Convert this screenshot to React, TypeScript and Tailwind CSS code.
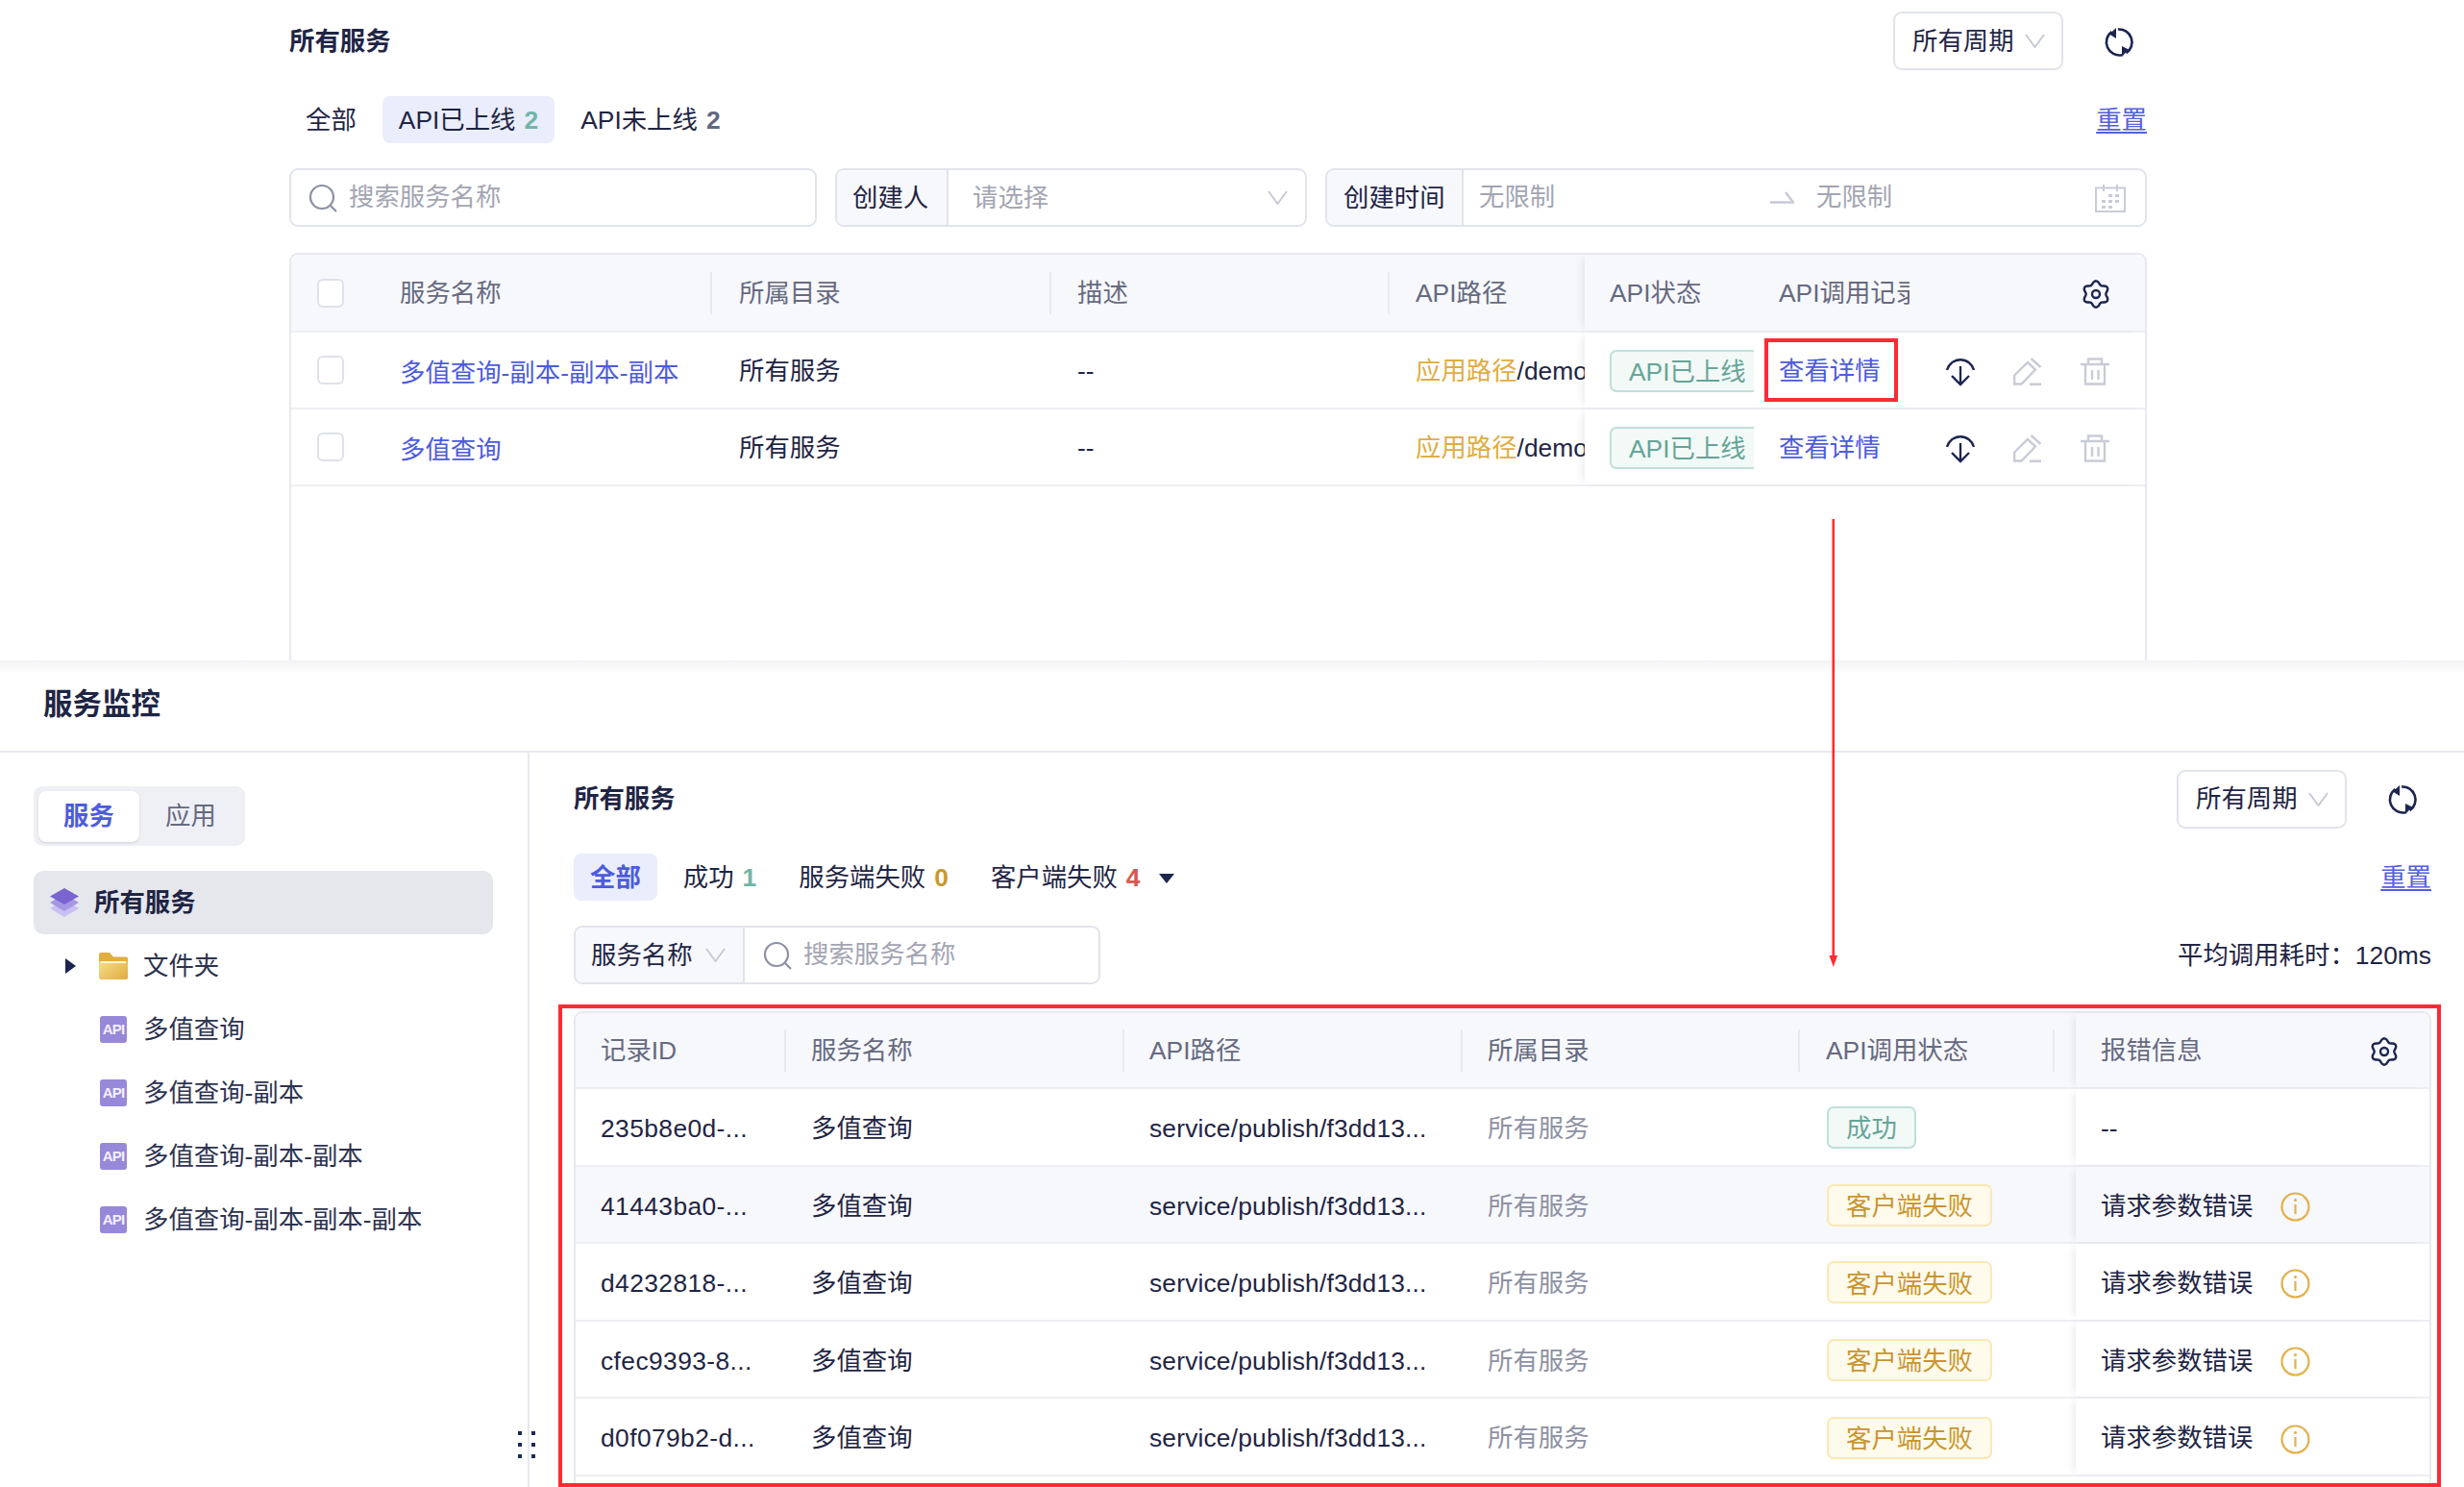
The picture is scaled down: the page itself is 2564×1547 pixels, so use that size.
import type { ReactNode } from 'react'

type Tab = { label: string; count?: string; countClass?: string; active?: boolean; bold?: boolean }

const TOP_TABS: Tab[] = [
  { label: '全部' },
  { label: 'API已上线', count: '2', countClass: 'text-[#72b5a7]', active: true },
  { label: 'API未上线', count: '2', countClass: 'text-[#636880]' },
]

const MONITOR_TABS: Tab[] = [
  { label: '全部', active: true, bold: true },
  { label: '成功', count: '1', countClass: 'text-[#72b5a7]' },
  { label: '服务端失败', count: '0', countClass: 'text-[#c99a2e]' },
  { label: '客户端失败', count: '4', countClass: 'text-[#d4594f]' },
]

const SERVICES = [
  { id: 1, name: '多值查询-副本-副本-副本' },
  { id: 2, name: '多值查询' },
]

const RECORDS = [
  { id: '235b8e0d-...', ok: true },
  { id: '41443ba0-...', ok: false, hover: true },
  { id: 'd4232818-...', ok: false },
  { id: 'cfec9393-8...', ok: false },
  { id: 'd0f079b2-d...', ok: false },
]

const TREE = ['多值查询', '多值查询-副本', '多值查询-副本-副本', '多值查询-副本-副本-副本']

// wavy six-lobed outline for the settings cog
const GEAR_PATH =
  Array.from({ length: 73 }, (_, i) => {
    const a = (i / 72) * Math.PI * 2
    const r = 12 + 1.7 * Math.cos(6 * a)
    return `${i === 0 ? 'M' : 'L'}${(15 + r * Math.sin(a)).toFixed(2)} ${(15 - r * Math.cos(a)).toFixed(2)}`
  }).join(' ') + ' Z'

function Chevron() {
  return (
    <svg className="w-[21px] h-[15px] shrink-0" viewBox="0 0 21 15" fill="none" stroke="#c8cad6" strokeWidth="2">
      <path d="M1 1l9.5 13L20 1" />
    </svg>
  )
}

function SearchIcon() {
  return (
    <svg className="w-[30px] h-[30px] shrink-0" viewBox="0 0 30 30" fill="none" stroke="#8d90a2" strokeWidth="2.2">
      <circle cx="14" cy="14" r="12" />
      <path d="M22.5 22.5L29 29" />
    </svg>
  )
}

function RefreshIcon() {
  return (
    <svg className="mt-[2px] w-[32px] h-[32px] shrink-0" viewBox="0 0 32 32" fill="none" stroke="#1c2550" strokeWidth="2.6">
      <path d="M8.500 5A13.500 13.500 0 0 0 19 29.200" />
      <path d="M15 2.500A13.500 13.500 0 0 1 23.500 27.200" />
      <path d="M13 1v11L6 7.500z" fill="#1c2550" stroke="none" />
      <path d="M19 31V20l7 3.500z" fill="#1c2550" stroke="none" />
    </svg>
  )
}

function GearIcon() {
  return (
    <svg className="mt-[2px] w-[30px] h-[30px] shrink-0" viewBox="0 0 30 30" fill="none" stroke="#1c2550" strokeWidth="2.4">
      <path d={GEAR_PATH} />
      <circle cx="15" cy="15" r="4" />
    </svg>
  )
}

function DownloadIcon() {
  return (
    <svg className="w-[30px] h-[30px]" viewBox="0 0 30 30" fill="none" stroke="#1c2550" strokeWidth="2.3">
      <path d="M1 13A14.5 14.5 0 0 1 29 13" />
      <path d="M15 9v19M6 19l9 9 9-9" />
    </svg>
  )
}

function EditIcon() {
  return (
    <svg className="w-[30px] h-[30px]" viewBox="0 0 30 30" fill="none" stroke="#c9ccd6" strokeWidth="2.4">
      <path d="M1.2 27.5V18.5L15 5l8 7.5L8.5 27.5z" />
      <path d="M18.5 1l10 9M17 27.8h12" />
    </svg>
  )
}

function TrashIcon() {
  return (
    <svg className="w-[30px] h-[30px]" viewBox="0 0 30 30" fill="none" stroke="#c9ccd6" strokeWidth="2.4">
      <path d="M0 7h30M8 7V1.5h14V7M5 7v20.5h20V7M12 13v10M18.500 13v10" />
    </svg>
  )
}

function InfoIcon() {
  return (
    <svg className="w-[31px] h-[31px] shrink-0" viewBox="0 0 31 31" fill="none" stroke="#e3b04b" strokeWidth="2.2">
      <circle cx="15.500" cy="15.500" r="14" />
      <path d="M15.500 13v10" />
      <circle cx="15.500" cy="8.500" r="1.600" fill="#e3b04b" stroke="none" />
    </svg>
  )
}

function CalendarIcon() {
  return (
    <svg className="w-[32px] h-[30px] shrink-0" viewBox="0 0 32 30" fill="none" stroke="#c9ccd8" strokeWidth="2">
      <path d="M1 4.500h30v24.500H1zM9 1v7M23 1v7" />
      <path
        d="M14 11h4v3h-4zM21 11h4v3h-4zM7 17h4v3H7zM14 17h4v3h-4zM21 17h4v3h-4zM7 23h4v3H7zM14 23h4v3h-4z"
        fill="#c9ccd8"
        stroke="none"
      />
    </svg>
  )
}

function StackIcon() {
  return (
    <svg className="w-[30px] h-[30px] shrink-0" viewBox="0 0 30 30">
      <path d="M15 12L30 21 15 30 0 21z" fill="#c9bff2" />
      <path d="M15 6L30 15 15 24 0 15z" fill="#a797e2" />
      <path d="M15 0L30 8.500 15 17 0 8.500z" fill="#7a64cf" />
    </svg>
  )
}

function FolderIcon() {
  return (
    <svg className="w-[30px] h-[28px] shrink-0" viewBox="0 0 30 28">
      <defs>
        <linearGradient id="folderFill" x1="0" y1="0.2" x2="1" y2="1">
          <stop offset="0" stopColor="#f5d884" />
          <stop offset="1" stopColor="#e0ac3e" />
        </linearGradient>
      </defs>
      <path d="M0 2a2 2 0 0 1 2-2h9l4 4.500h13a2 2 0 0 1 2 2V12H0z" fill="#e2ae3f" />
      <rect x="0" y="9" width="30" height="19" rx="2" fill="url(#folderFill)" />
      <rect x="2" y="9" width="26" height="2" fill="#fdf3d4" />
    </svg>
  )
}

function ApiIcon() {
  return (
    <span className="flex w-[28px] h-[28px] shrink-0 items-center justify-center rounded-[3px] bg-[#9888da] text-[15px] font-bold tracking-[-0.8px] text-[#f4f1ff]">
      API
    </span>
  )
}

function PeriodSelect() {
  return (
    <div className="flex w-[177px] h-[61px] items-center gap-[11px] rounded-[9px] border-2 border-[#e2e4ec] pl-[18px]">
      <span className="pt-[2px]">所有周期</span>
      <Chevron />
    </div>
  )
}

function TabRow({ tabs, extra }: { tabs: Tab[]; extra?: ReactNode }) {
  return (
    <div className="flex h-[49px] items-center justify-between">
      <div className="flex items-center gap-[10px]">
        {tabs.map((tab) => (
          <div
            key={tab.label}
            className={`flex h-[49px] items-center gap-[9px] rounded-[8px] px-[17px] pt-[2px] ${tab.active ? 'bg-[#e9edfc]' : ''} ${tab.bold ? 'font-bold text-[#4d5bdc]' : ''}`}
          >
            <span>{tab.label}</span>
            {tab.count && <span className={`font-bold ${tab.countClass}`}>{tab.count}</span>}
          </div>
        ))}
        {extra}
      </div>
      <span className="pt-[2px] text-[#5560d8] underline underline-offset-[3px]">重置</span>
    </div>
  )
}

function Badge({ tone, children }: { tone: 'green' | 'amber'; children: ReactNode }) {
  const toneClass =
    tone === 'green'
      ? 'border-[#bfe0d9] bg-[#f2f9f7] text-[#66a598]'
      : 'border-[#fbe8b4] bg-[#fefaec] text-[#c9952e]'
  return (
    <span className={`flex h-[44px] shrink-0 items-center rounded-[7px] border-2 px-[18px] pt-[4px] ${toneClass}`}>
      {children}
    </span>
  )
}

function HeadCell({ className, label, divider = true }: { className: string; label: string; divider?: boolean }) {
  return (
    <div className={`flex h-full items-center justify-between text-[#666a80] ${className}`}>
      <span className="pt-[3px] whitespace-nowrap">{label}</span>
      {divider && <i className="h-[44px] w-[2px] bg-[#e9eaf0]" />}
    </div>
  )
}

function ServiceTable() {
  return (
    <div className="flex-1 rounded-t-[9px] border-x-2 border-t-2 border-[#e8e9f0]">
      <div className="flex h-[81px] justify-between rounded-t-[8px] border-b-2 border-[#eeeff3] bg-[#f7f8fc]">
        <div className="flex">
          <div className="flex w-[88px] items-center pl-[27px]">
            <i className="h-[30px] w-[28px] rounded-[6px] border-2 border-[#dfe1ea] bg-white" />
          </div>
          <HeadCell className="w-[350px] pl-[25px]" label="服务名称" />
          <HeadCell className="w-[353px] pl-[28px]" label="所属目录" />
          <HeadCell className="w-[352px] pl-[27px]" label="描述" />
          <HeadCell className="w-[203px] pl-[27px]" label="API路径" divider={false} />
        </div>
        <div className="flex w-[583px] shadow-[-6px_0_8px_-4px_rgba(30,35,70,0.1)]">
          <div className="flex w-[176px] items-center pl-[26px] pt-[3px] text-[#666a80]">API状态</div>
          <div className="flex w-[162px] items-center overflow-hidden pl-[26px] pt-[3px] whitespace-nowrap text-[#666a80]">API调用记录</div>
          <div className="flex flex-1 items-center justify-end pr-[36px]">
            <GearIcon />
          </div>
        </div>
      </div>
      {SERVICES.map((service, index) => (
        <div key={service.id} className="flex h-[80px] justify-between border-b-2 border-[#eeeff3]">
          <div className="flex">
            <div className="flex w-[88px] items-center pl-[27px]">
              <i className="h-[30px] w-[28px] rounded-[6px] border-2 border-[#dfe1ea]" />
            </div>
            <div className="flex w-[350px] items-center pl-[25px] pt-[8px] whitespace-nowrap text-[#4d5bdc]">{service.name}</div>
            <div className="flex w-[353px] items-center pl-[28px] pt-[3px]">所有服务</div>
            <div className="flex w-[352px] items-center pl-[27px] pt-[3px]">--</div>
            <div className="flex w-[203px] items-center overflow-hidden pl-[27px] pt-[4px] whitespace-nowrap">
              <span className="text-[#e0ad44]">应用路径</span>/demo/list
            </div>
          </div>
          <div className="flex w-[583px] bg-white shadow-[-6px_0_8px_-4px_rgba(30,35,70,0.1)]">
            <div className="flex w-[176px] items-center overflow-hidden pl-[26px] pt-[2px]">
              <Badge tone="green">API已上线</Badge>
            </div>
            <div className="relative flex w-[162px] items-center pl-[26px] pt-[3px] text-[#4d5bdc]">
              查看详情
              {index === 0 && (
                <i className="absolute left-[11px] top-[6px] h-[66px] w-[139px] border-4 border-[#ff2a33]" />
              )}
            </div>
            <div className="flex flex-1 items-center gap-[40px] pl-[38px] pt-[4px]">
              <DownloadIcon />
              <EditIcon />
              <TrashIcon />
            </div>
          </div>
        </div>
      ))}
    </div>
  )
}

function RecordTable() {
  return (
    <div className="flex-1 rounded-t-[9px] border-x-2 border-t-2 border-[#e8e9f0]">
      <div className="flex h-[79px] justify-between rounded-t-[8px] border-b-2 border-[#eeeff3] bg-[#f7f8fc]">
        <div className="flex">
          <HeadCell className="w-[219px] pl-[26px]" label="记录ID" />
          <HeadCell className="w-[352px] pl-[26px]" label="服务名称" />
          <HeadCell className="w-[352px] pl-[26px]" label="API路径" />
          <HeadCell className="w-[351px] pl-[26px]" label="所属目录" />
          <HeadCell className="w-[265px] pl-[27px]" label="API调用状态" />
        </div>
        <div className="flex w-[368px] items-center justify-between pl-[26px] pr-[32px] text-[#666a80] shadow-[-6px_0_8px_-4px_rgba(30,35,70,0.1)]">
          <span className="pt-[3px]">报错信息</span>
          <GearIcon />
        </div>
      </div>
      {RECORDS.map((record) => (
        <div
          key={record.id}
          className={`flex h-[80.6px] justify-between border-b-2 border-[#eeeff3] ${record.hover ? 'bg-[#f7f8fc]' : 'bg-white'}`}
        >
          <div className="flex items-center whitespace-nowrap">
            <div className="w-[219px] pl-[26px] pt-[5px] tracking-[0.4px]">{record.id}</div>
            <div className="w-[352px] pl-[26px] pt-[5px]">多值查询</div>
            <div className="w-[352px] pl-[26px] pt-[5px] tracking-[0.16px]">service/publish/f3dd13...</div>
            <div className="w-[351px] pl-[26px] pt-[5px] text-[#8e91a3]">所有服务</div>
            <div className="flex w-[265px] pl-[28px] pt-[2px]">
              {record.ok ? <Badge tone="green">成功</Badge> : <Badge tone="amber">客户端失败</Badge>}
            </div>
          </div>
          <div
            className={`flex w-[368px] items-center pl-[26px] pt-[5px] shadow-[-6px_0_8px_-4px_rgba(30,35,70,0.1)] ${record.hover ? 'bg-[#f7f8fc]' : 'bg-white'}`}
          >
            {record.ok ? (
              '--'
            ) : (
              <>
                <span>请求参数错误</span>
                <span className="ml-[29px]">
                  <InfoIcon />
                </span>
              </>
            )}
          </div>
        </div>
      ))}
    </div>
  )
}

function Sidebar() {
  return (
    <aside className="w-[551px] shrink-0 border-r-2 border-[#e8e9f0] pl-[35px] pt-[35px]">
      <div className="flex h-[62px] w-[220px] items-center rounded-[9px] bg-[#eff0f6] pl-[5px]">
        <div className="flex h-[53px] w-[105px] items-center justify-center rounded-[8px] bg-white pt-[2px] font-bold text-[#4d5bdc] shadow-sm">
          服务
        </div>
        <div className="ml-[27px] pt-[2px] text-[#666a80]">应用</div>
      </div>
      <div className="mt-[26px] flex h-[66px] w-[478px] items-center gap-[16px] rounded-[10px] bg-[#e6e7ed] pl-[17px] font-bold">
        <StackIcon />
        <span className="pt-[2px]">所有服务</span>
      </div>
      <div className="flex h-[66px] items-center pl-[33px] text-[#2d3350]">
        <svg className="h-[16px] w-[11px]" viewBox="0 0 11 16">
          <path d="M0 0l11 8-11 8z" fill="#1c2550" />
        </svg>
        <span className="ml-[24px]">
          <FolderIcon />
        </span>
        <span className="ml-[16px] pt-[2px]">文件夹</span>
      </div>
      {TREE.map((name) => (
        <div key={name} className="flex h-[66px] items-center gap-[17px] pl-[69px] text-[#2d3350]">
          <ApiIcon />
          <span className="pt-[2px]">{name}</span>
        </div>
      ))}
    </aside>
  )
}

export default function App() {
  return (
    <div className="relative h-[1547px] w-[2564px] overflow-hidden bg-white text-[26.4px] leading-[1.2] text-[#1f2544] [font-family:'Liberation_Sans','Noto_Sans_CJK_SC',sans-serif]">
      {/* published services list */}
      <section className="ml-[301px] flex h-[687px] w-[1933px] flex-col pt-[12px]">
        <div className="flex h-[61px] items-center justify-between">
          <h2 className="pt-[2px] font-bold">所有服务</h2>
          <div className="flex items-center gap-[42px] pr-[13px]">
            <PeriodSelect />
            <RefreshIcon />
          </div>
        </div>
        <div className="mt-[27px]">
          <TabRow tabs={TOP_TABS} />
        </div>
        <div className="mt-[26px] flex h-[61px] gap-[19px]">
          <div className="flex w-[549px] items-center gap-[12px] rounded-[9px] border-2 border-[#e2e4ec] pl-[18px] text-[#a3a5b3]">
            <SearchIcon />
            <span className="pt-[1px]">搜索服务名称</span>
          </div>
          <div className="flex w-[491px] items-center overflow-hidden rounded-[9px] border-2 border-[#e2e4ec]">
            <div className="flex h-full w-[116px] items-center border-r-2 border-[#e2e4ec] bg-[#f7f8fc] pl-[16px] pt-[3px]">创建人</div>
            <span className="ml-[25px] flex-1 pt-[2px] text-[#a3a5b3]">请选择</span>
            <span className="pr-[18px]">
              <Chevron />
            </span>
          </div>
          <div className="flex flex-1 items-center overflow-hidden rounded-[9px] border-2 border-[#e2e4ec] text-[#a3a5b3]">
            <div className="flex h-full w-[142px] items-center border-r-2 border-[#e2e4ec] bg-[#f7f8fc] pl-[17px] pt-[3px] text-[#1f2544]">创建时间</div>
            <span className="ml-[16px] w-[303px] pt-[1px]">无限制</span>
            <svg className="mr-[23px] h-[13px] w-[25px]" viewBox="0 0 25 13" fill="none" stroke="#c7c9d6" strokeWidth="2.4">
              <path d="M0 11.500h24L16 1" />
            </svg>
            <span className="flex-1 pt-[1px]">无限制</span>
            <span className="pr-[20px]">
              <CalendarIcon />
            </span>
          </div>
        </div>
        <div className="mt-[27px] flex flex-1">
          <ServiceTable />
        </div>
      </section>

      {/* service monitor panel */}
      <section className="relative bg-[linear-gradient(#f3f3f6,#ffffff_14px)]">
        <header className="flex h-[96px] items-center border-b-2 border-[#e8e9f0] pb-[4px] pl-[45px] text-[30.5px] font-bold">
          服务监控
        </header>
        <div className="flex h-[764px] bg-white">
          <Sidebar />
          <main className="flex flex-1 flex-col pl-[46px] pr-[34px] pt-[17px]">
            <div className="flex h-[62px] items-center justify-between">
              <h2 className="pt-[2px] font-bold">所有服务</h2>
              <div className="flex items-center gap-[42px] pr-[14px]">
                <PeriodSelect />
                <RefreshIcon />
              </div>
            </div>
            <div className="mt-[26px]">
              <TabRow
                tabs={MONITOR_TABS}
                extra={
                  <svg className="-ml-[8px] mt-[3px] h-[10px] w-[16px]" viewBox="0 0 16 10">
                    <path d="M0 0h16L8 10z" fill="#1c2550" />
                  </svg>
                }
              />
            </div>
            <div className="mt-[26px] flex h-[61px] items-center justify-between">
              <div className="flex h-full w-[548px] items-center overflow-hidden rounded-[9px] border-2 border-[#e2e4ec]">
                <div className="flex h-full w-[176px] items-center gap-[13px] border-r-2 border-[#e2e4ec] bg-[#f7f8fc] pl-[16px]">
                  <span className="pt-[2px]">服务名称</span>
                  <Chevron />
                </div>
                <div className="flex items-center gap-[12px] pl-[19px] text-[#a3a5b3]">
                  <SearchIcon />
                  <span className="pt-[1px]">搜索服务名称</span>
                </div>
              </div>
              <span className="pt-[2px]">平均调用耗时：120ms</span>
            </div>
            <div className="mt-[28px] flex flex-1">
              <RecordTable />
            </div>
          </main>
        </div>
      </section>

      {/* annotations laid over the screenshot */}
      <svg className="absolute left-[1900px] top-[540px] h-[466px] w-[16px]" viewBox="0 0 16 466">
        <path d="M7.800 0v456" stroke="#ff2a33" strokeWidth="2.600" />
        <path d="M3.500 454h8.600L7.800 466z" fill="#ff2a33" />
      </svg>
      <i className="absolute left-[581px] top-[1045px] h-[502px] w-[1959px] border-4 border-[#ff2a33]" />
      <div className="absolute left-[539px] top-[1489px] grid grid-cols-2 gap-x-[10px] gap-y-[8px]">
        {[0, 1, 2, 3, 4, 5].map((dot) => (
          <i key={dot} className="h-[4px] w-[4px] bg-[#1d2a55]" />
        ))}
      </div>
    </div>
  )
}
